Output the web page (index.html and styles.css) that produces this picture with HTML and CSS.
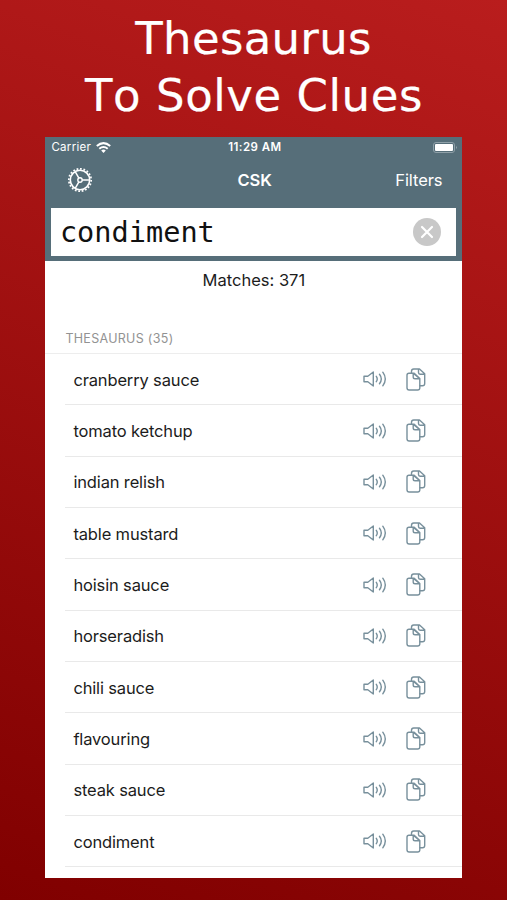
FILE: index.html
```html
<!DOCTYPE html>
<html lang="en">
<head>
<meta charset="utf-8">
<title>CSK Thesaurus</title>
<link rel="stylesheet" href="styles.css">
</head>
<body>
<svg width="0" height="0" class="defs">
  <symbol id="sound" viewBox="0 0 24 18"><path d="M1 6.200h3.800L10.300 2v14l-5.500-4.200H1z"/><path d="M13.300 6.300q1.900 2.700 0 5.400M16.500 4.300q3.600 4.700 0 9.400M19.800 2.200q5 6.800 0 13.600"/></symbol>
  <symbol id="copy" viewBox="0 0 20 23"><path d="M5.500 5V3.200q0-2.200 2.200-2.200H13.500l5.200 4.800V15.500q0 2.200-2.200 2.200H14M12.500 1v3.600q0 1.600 1.600 1.600H18.500"/><path d="M3 5.200h5.200l5.600 5.300V19.800q0 2.200-2.200 2.200H3.200q-2.200 0-2.200-2.200V7.200q0-2 2-2zM7.200 5.200v3.700q0 1.800 1.800 1.800h4.800z"/></symbol>
</svg>
<h1 class="headline"><span class="l1">Thesaurus</span><span class="l2">To Solve Clues</span></h1>
<main class="phone">
  <header class="top">
    <div class="status">
      <div class="carrier"><span>Carrier</span>
        <svg width="15" height="11" viewBox="0 0 15 11"><g fill="none" stroke="#fff" stroke-width="2"><path d="M.8 4q6.700-5.700 13.400 0"/><path d="M3.300 6.700q4.200-3.500 8.400 0"/></g><path d="M5.200 8.400q2.300-1.600 4.600 0L7.500 11z" fill="#fff"/></svg>
      </div>
      <span class="time">11:29 AM</span>
      <svg class="battery" width="25" height="11" viewBox="0 0 25 11"><rect x=".5" y=".5" width="21" height="10" rx="2.500" fill="none" stroke="#8fa0a8"/><rect x="2" y="2" width="18" height="7" rx="1" fill="#fff"/><path d="M23 3.700q1.600 1.800 0 3.600z" fill="#a3b1b8"/></svg>
    </div>
    <nav class="nav">
      <svg class="gear" width="26" height="26" viewBox="-13 -13 26 26" fill="none" stroke="#fff"><circle r="11.200" stroke-width="1.700" pathLength="80" stroke-dasharray="2 2"/><circle r="9.700" stroke-width="1.600"/><circle r="2.200" stroke-width="1.400"/><path d="M2.200 0H9.500M-1.100-1.900-4.800-8.300M-1.100 1.900-4.800 8.300" stroke-width="1.500"/></svg>
      <b>CSK</b>
      <span class="filters">Filters</span>
    </nav>
    <div class="search"><span>condiment</span>
      <svg width="28" height="28" viewBox="0 0 28 28"><circle cx="14" cy="14" r="14" fill="#c8c8c8"/><path d="M9 9l10 10M19 9L9 19" stroke="#fff" stroke-width="2.200" stroke-linecap="round"/></svg>
    </div>
  </header>
  <p class="matches"><span>Matches: 371</span></p>
  <h2 class="section">THESAURUS (35)</h2>
  <ul class="list">
    <li><span>cranberry sauce</span><svg class="sound"><use href="#sound"/></svg><svg class="copy"><use href="#copy"/></svg></li>
    <li><span>tomato ketchup</span><svg class="sound"><use href="#sound"/></svg><svg class="copy"><use href="#copy"/></svg></li>
    <li><span>indian relish</span><svg class="sound"><use href="#sound"/></svg><svg class="copy"><use href="#copy"/></svg></li>
    <li><span>table mustard</span><svg class="sound"><use href="#sound"/></svg><svg class="copy"><use href="#copy"/></svg></li>
    <li><span>hoisin sauce</span><svg class="sound"><use href="#sound"/></svg><svg class="copy"><use href="#copy"/></svg></li>
    <li><span>horseradish</span><svg class="sound"><use href="#sound"/></svg><svg class="copy"><use href="#copy"/></svg></li>
    <li><span>chili sauce</span><svg class="sound"><use href="#sound"/></svg><svg class="copy"><use href="#copy"/></svg></li>
    <li><span>flavouring</span><svg class="sound"><use href="#sound"/></svg><svg class="copy"><use href="#copy"/></svg></li>
    <li><span>steak sauce</span><svg class="sound"><use href="#sound"/></svg><svg class="copy"><use href="#copy"/></svg></li>
    <li><span>condiment</span><svg class="sound"><use href="#sound"/></svg><svg class="copy"><use href="#copy"/></svg></li>
  </ul>
</main>
</body>
</html>
```
FILE: styles.css
```css
* { box-sizing: border-box; margin: 0; padding: 0; }
body {
  width: 507px;
  height: 900px;
  overflow: hidden;
  background: linear-gradient(20deg, #800000, #b91d1d);
  font-family: Inter, sans-serif;
  color: #1c1c1c;
}
.defs { display: block; }
.headline {
  height: 137px;
  padding-top: 10px;
  font: 400 45px/57px "DejaVu Sans", sans-serif;
  font-kerning: none;
  -webkit-text-stroke: 0.2px #fff;
  color: #fff;
  text-align: center;
}
.headline span { display: block; white-space: nowrap; }
.l1 { letter-spacing: 0.3px; }
.l2 { padding-left: 1px; letter-spacing: 0.550px; }
.phone {
  width: 417px;
  height: 741px;
  margin-left: 45.400px;
  background: #fff;
  overflow: hidden;
}
.top { height: 124px; background: #566e79; color: #fff; }
.status {
  display: grid;
  grid-template-columns: 1fr auto 1fr;
  align-items: center;
  height: 20px;
  padding: 0 4px 0 6px;
  font-size: 11.500px;
}
.carrier { display: flex; align-items: center; gap: 5px; letter-spacing: 0.3px; }
.time { font-weight: 600; letter-spacing: 0.450px; }
.battery { justify-self: end; }
.nav {
  display: grid;
  grid-template-columns: 1fr auto 1fr;
  align-items: center;
  height: 46px;
  padding: 0 20px 0 21.500px;
  font-size: 16.500px;
}
.nav b { font-weight: 600; }
.filters { justify-self: end; letter-spacing: -0.1px; }
.search {
  display: flex;
  align-items: center;
  justify-content: space-between;
  height: 48px;
  margin: 4.500px 6px 0;
  padding: 0 15px 0 8.500px;
  background: #fff;
  color: #111;
  font: 28.600px "DejaVu Sans Mono", monospace;
}
.matches { height: 38px; line-height: 38px; text-align: center; font-size: 16.500px; }
.section {
  height: 54px;
  padding: 31px 0 0 20px;
  font-size: 12.500px;
  line-height: 18px;
  font-weight: 400;
  letter-spacing: 0.3px;
  color: #929292;
}
.list { list-style: none; border-top: 1px solid #ededed; }
.list li {
  display: flex;
  align-items: center;
  height: 51.350px;
  margin-left: 20px;
  padding: 0 36px 0 8px;
  border-bottom: 1px solid #e9e9e9;
  font-size: 16.500px;
  letter-spacing: -0.150px;
}
.list span { flex: 1; padding-top: 1px; }
.list svg { fill: none; stroke: #78909c; stroke-width: 1.400; stroke-linejoin: round; stroke-linecap: round; }
.sound { width: 24px; height: 18px; margin-right: 19px; }
.copy { width: 20px; height: 23px; }
```
